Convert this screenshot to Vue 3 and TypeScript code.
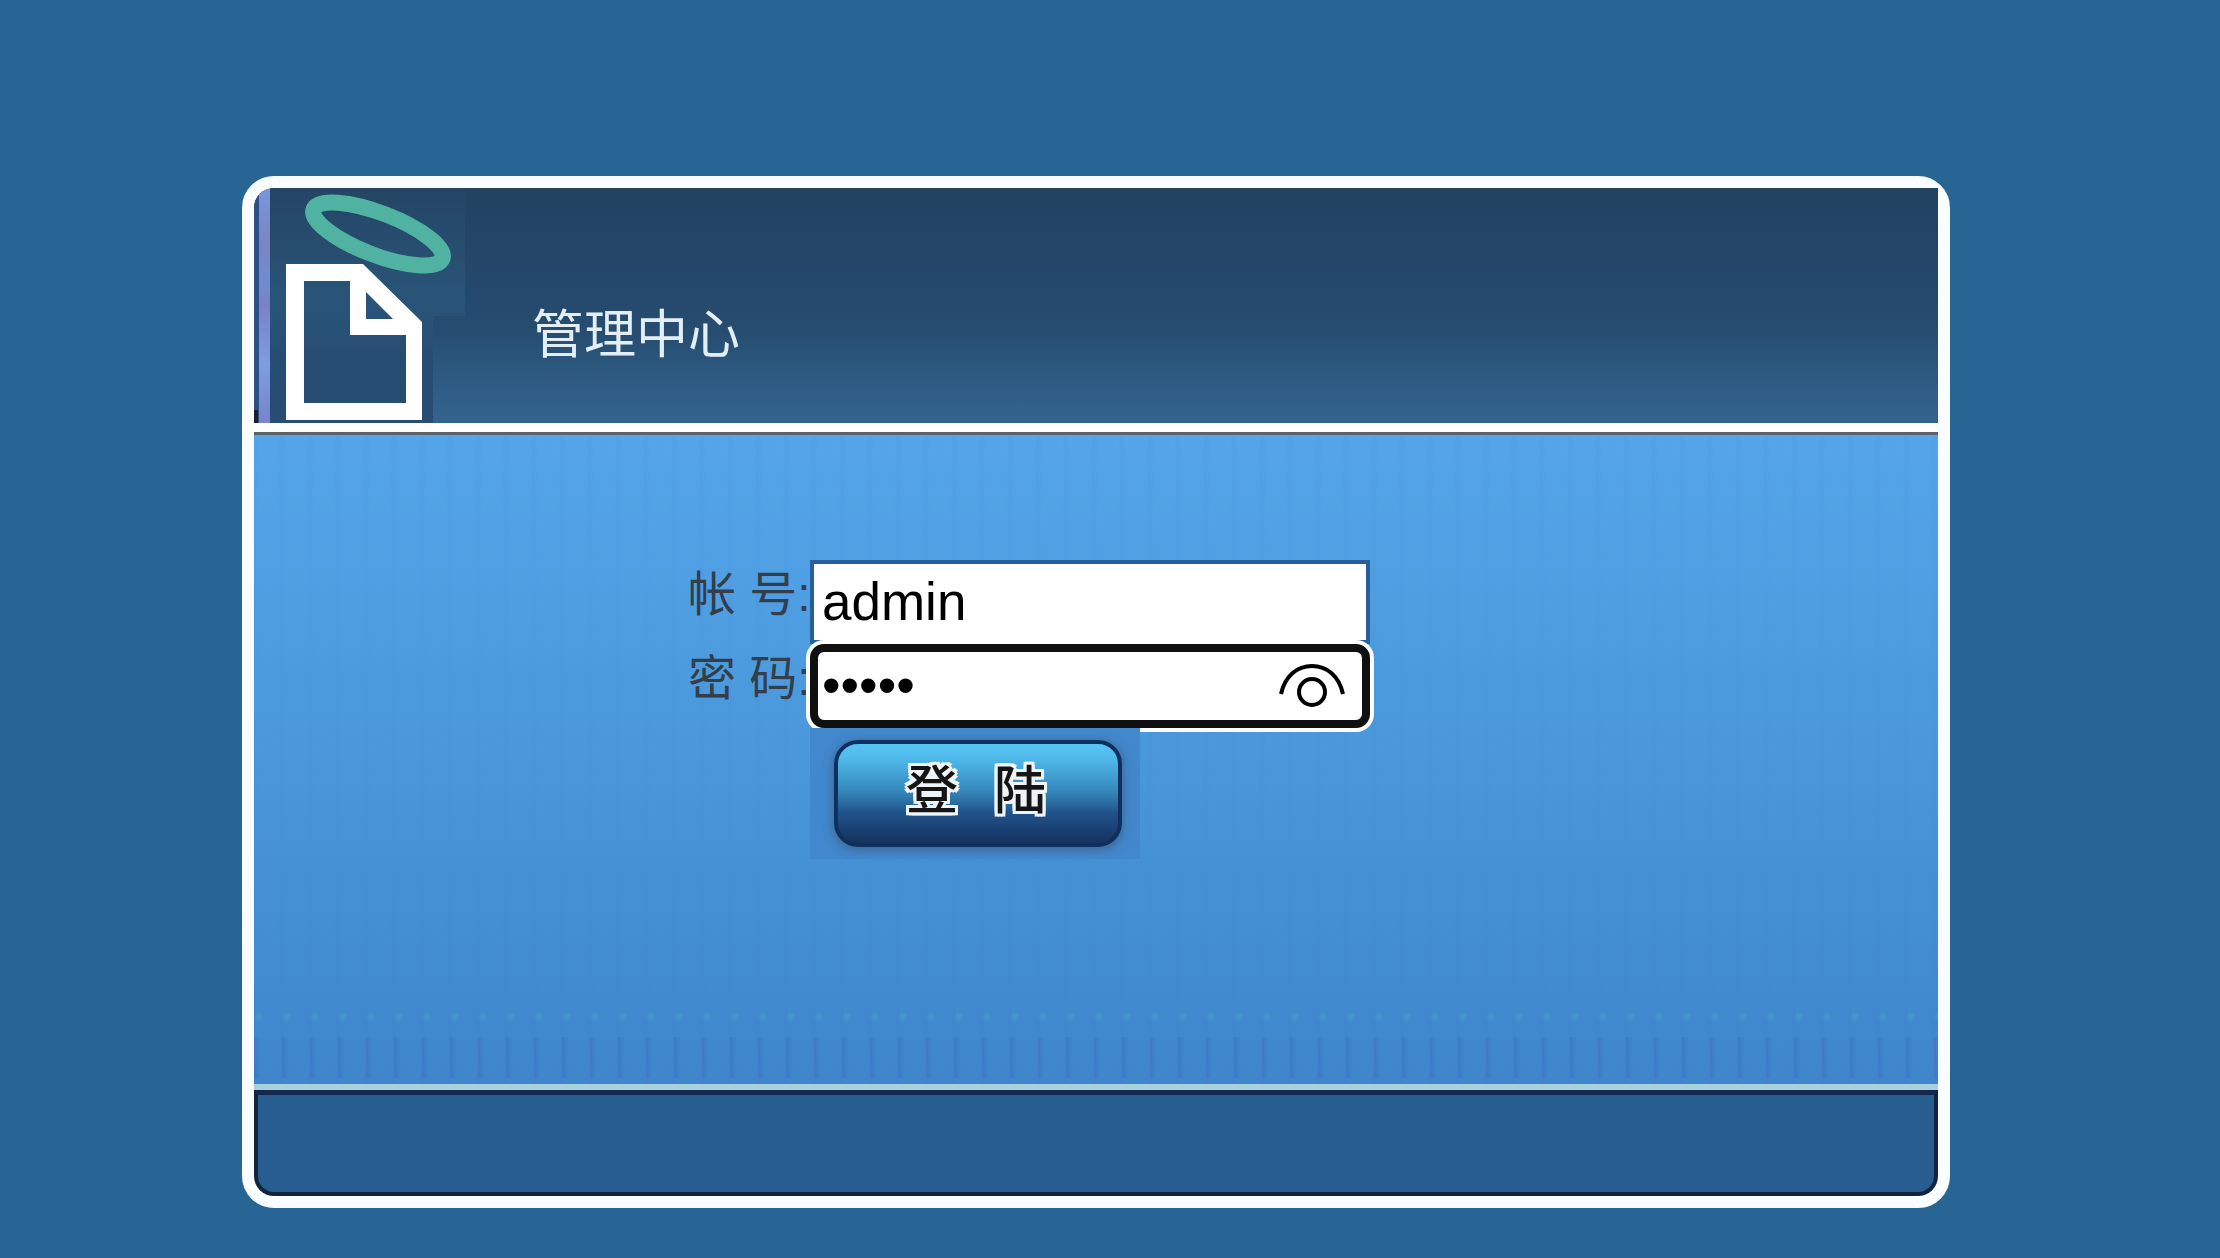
<script setup lang="ts">
import { ref } from 'vue'

const account = ref('admin')
const password = ref('admin')
const revealed = ref(false)
</script>

<template>
  <main class="page">
    <section class="panel">
      <header class="head">
        <svg class="logo" viewBox="0 0 164 235" aria-hidden="true">
          <defs>
            <linearGradient id="patch" x1="0" y1="0" x2="0" y2="1">
              <stop offset="0" stop-color="#244564" />
              <stop offset="0.85" stop-color="#295478" />
              <stop offset="1" stop-color="#29527a" />
            </linearGradient>
            <linearGradient id="patchLow" x1="0" y1="0" x2="0" y2="1">
              <stop offset="0" stop-color="#285377" />
              <stop offset="0.4" stop-color="#274c72" />
              <stop offset="1" stop-color="#274d73" />
            </linearGradient>
            <linearGradient id="strip" x1="0" y1="0" x2="0" y2="1">
              <stop offset="0" stop-color="#7797dc" />
              <stop offset="0.25" stop-color="#7b84c5" />
              <stop offset="0.4" stop-color="#6f8dcf" />
              <stop offset="0.5" stop-color="#7d80c8" />
              <stop offset="0.75" stop-color="#7c9de0" />
              <stop offset="1" stop-color="#7884cb" />
            </linearGradient>
          </defs>
          <rect x="16" y="0" width="195" height="128" fill="url(#patch)" />
          <rect x="16" y="128" width="163" height="107" fill="url(#patchLow)" />
          <rect width="5" height="235" fill="#2c4f86" />
          <rect x="5" width="11" height="235" fill="url(#strip)" />
          <rect y="222" width="4" height="13" fill="#16202e" />
          <ellipse cx="124" cy="46" rx="69" ry="21" transform="rotate(21 124 46)" fill="none" stroke="#50b2a0" stroke-width="16" />
          <path fill="#fff" fill-rule="evenodd" d="M32 76H109L168 134V232H32ZM50 93V215H152V147H96V93ZM112 104V131H139Z" />
        </svg>
        <h1 class="title">管理中心</h1>
      </header>

      <form class="body" @submit.prevent>
        <div class="row">
          <label class="label" for="account">帐 号:</label>
          <input id="account" v-model="account" class="field" type="text" />
        </div>
        <div class="row">
          <label class="label" for="password">密 码:</label>
          <div class="secret">
            <input id="password" v-model="password" class="field focused" :type="revealed ? 'text' : 'password'" />
            <button class="eye" type="button" aria-label="显示密码" @click="revealed = !revealed">
              <svg viewBox="0 0 68 46" aria-hidden="true">
                <g fill="none" stroke="#000" stroke-width="4">
                  <path d="M3 32C7 14 19 4 34 4S61 14 65 32" />
                  <circle cx="34" cy="30" r="13" />
                </g>
              </svg>
            </button>
          </div>
        </div>
        <div class="actions">
          <button class="submit" type="submit"><span>登</span> <span>陆</span></button>
        </div>
      </form>

      <footer class="foot"></footer>
    </section>
  </main>
</template>

<style>
body {
  background: #276595;
}
</style>

<style scoped>
.page {
  box-sizing: border-box;
  min-height: 100vh;
  padding: 176px 270px 48px 242px;
  background: #276595;
  font-family: "Liberation Sans", "Noto Sans CJK SC", sans-serif;
}

.panel {
  border: 12px solid #fafdff;
  border-radius: 32px;
  background: #fafdff;
}

.head {
  display: flex;
  height: 235px;
  overflow: hidden;
  border-radius: 20px 0 0 0;
  border-bottom: 9px solid #fff;
  background: linear-gradient(#23435f, #224467 18%, #264c70 60%, #2c587f 78%, #33648f);
}

.logo {
  flex: none;
  width: 164px;
  height: 235px;
  overflow: visible;
}

.title {
  margin: 103px 0 0 114px;
  color: #e3eef7;
  font-family: "Noto Sans CJK SC", sans-serif;
  font-size: 52px;
  font-weight: 400;
  line-height: 80px;
}

.body {
  box-sizing: border-box;
  min-height: 658px;
  padding: 125px 0 0 434px;
  border-top: 3px solid #5c6266;
  background:
    radial-gradient(circle at 5px 5px, rgba(70, 165, 205, 0.6), rgba(70, 165, 205, 0) 5px) 0 577px / 28px 10px repeat-x,
    linear-gradient(90deg, rgba(60, 110, 195, 0.5), rgba(60, 110, 195, 0) 7px) 0 602px / 28px 42px repeat-x,
    repeating-linear-gradient(90deg, rgba(40, 100, 190, 0.06) 0, rgba(40, 100, 190, 0) 4px 24px, rgba(40, 100, 190, 0.06) 28px),
    linear-gradient(#55a5ea, #4c9ade 40%, #448ed3 75%, #3f86cb);
}

.row {
  display: flex;
  height: 84px;
}

.label {
  box-sizing: border-box;
  width: 122px;
  color: #333e48;
  font-size: 48px;
  line-height: 70px;
  white-space: nowrap;
}

.field {
  box-sizing: border-box;
  width: 560px;
  height: 84px;
  padding: 0 8px 2px;
  border: 4px solid #285f98;
  border-radius: 0;
  outline: none;
  background: #fff;
  color: #000;
  font-family: "Liberation Sans", sans-serif;
  font-size: 53px;
}

.focused {
  padding: 0 4px 2px;
  border: 8px solid #101010;
  border-radius: 14px;
  box-shadow: 0 0 0 4px #fff;
}

.secret {
  position: relative;
  width: 560px;
}

.eye {
  position: absolute;
  top: 18px;
  right: 24px;
  width: 68px;
  height: 46px;
  padding: 0;
  border: 0;
  background: none;
}

.eye svg {
  display: block;
}

.actions {
  position: relative;
  box-sizing: border-box;
  width: 330px;
  height: 131px;
  margin-left: 122px;
  padding: 12px 18px 12px 24px;
  background: #4288ce;
}

.submit {
  display: flex;
  align-items: center;
  justify-content: center;
  gap: 36px;
  width: 100%;
  height: 107px;
  padding: 0 4px 14px 0;
  border: 4px solid #0f2f5e;
  border-radius: 24px;
  background: linear-gradient(#56c5f5, #4fb9ea 15%, #3587ba 48%, #205189 70%, #15335f);
  box-shadow: 0 2px 8px 2px rgba(60, 90, 120, 0.6);
  color: #151515;
  font-family: "Noto Sans CJK SC", sans-serif;
  font-size: 52px;
  font-weight: 500;
  line-height: 60px;
  text-shadow: 3px 0 #eef4f8, -3px 0 #eef4f8, 0 3px #eef4f8, 0 -3px #eef4f8, 3px 3px #eef4f8, -3px 3px #eef4f8, 3px -3px #eef4f8, -3px -3px #eef4f8;
}

.foot {
  box-sizing: border-box;
  height: 106px;
  border: 4px solid #12243c;
  border-top: 5px solid #14284f;
  border-radius: 0 0 20px 20px;
  background: #285d92;
  box-shadow: 0 -6px #a9d0dc;
}
</style>
